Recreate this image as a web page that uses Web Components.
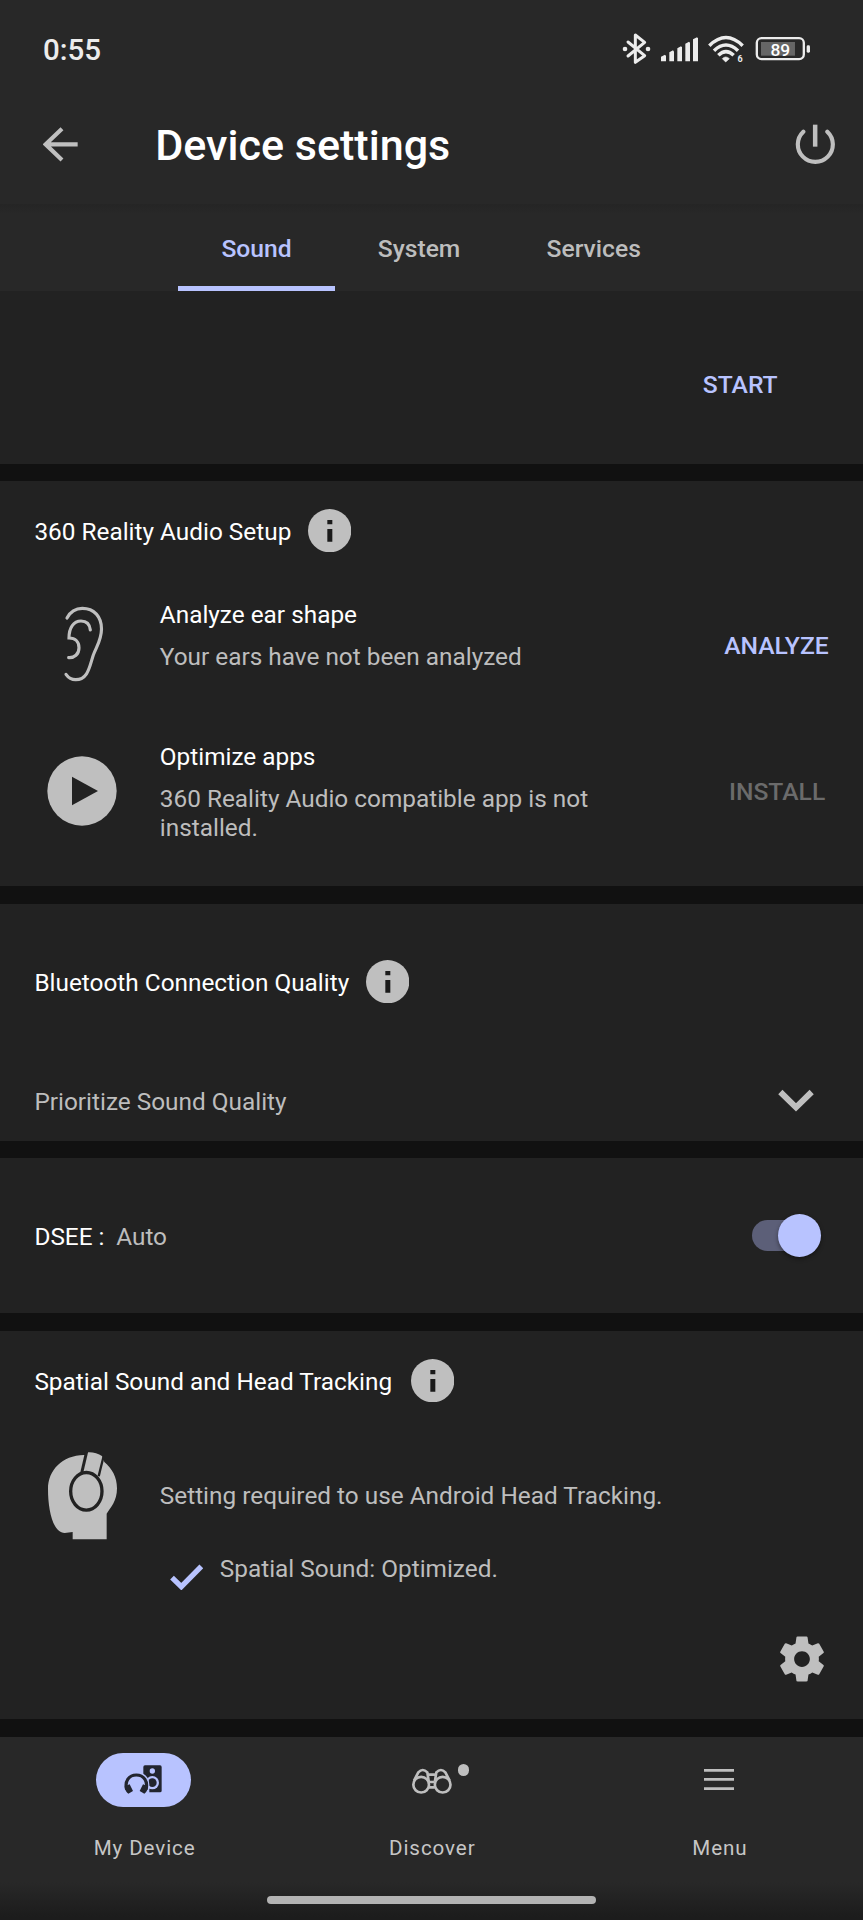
<!DOCTYPE html>
<html lang="en">
<head>
<meta charset="utf-8">
<title>Device settings</title>
<style>
  html, body { margin: 0; background: #111; }
  body { font-family: Roboto, sans-serif; font-size: 24.36px; line-height: 29px; color: #fff; width: 863px; height: 1920px; overflow: hidden; }
</style>
</head>
<body>
<script>
const define = (name, html, setup) => {
  const tpl = document.createElement('template');
  tpl.innerHTML = html;
  customElements.define(name, class extends HTMLElement {
    connectedCallback() {
      if (this.shadowRoot) return;
      this.attachShadow({ mode: 'open' }).append(tpl.content.cloneNode(true));
      if (setup) setup(this, this.shadowRoot);
    }
  });
};

const ICONS = {
  back: [[130, 376, 104, 110], '<path d="M187 384 138 431 187 478M140 431H234" fill="none" stroke="currentColor" stroke-width="12.500"/>'],
  power: [[586, 310, 120, 124], '<path d="M611 333A52.500 52.500 0 1 0 683 333" fill="none" stroke="currentColor" stroke-width="12.500" stroke-linecap="round"/><path d="M646.500 312V378" stroke="currentColor" stroke-width="13.500"/>'],
  ear: [[190, 408, 126, 234], '<g fill="none" stroke="currentColor" stroke-width="9.500" stroke-linecap="round"><path d="M202 447C212 428 228 418 248 418C284 418 305.500 444 305.500 480C305.500 512 292 530 281 558C270 590 266 632 228 632C214 632 206 626 199 616"/><path d="M272 483C270 464 260 456 244 456C222 456 208 476 208 507C228 507 238 520 238 536C238 556 224 567 207 566"/></g>'],
  play: [[141, 860, 210, 210], '<circle cx="246" cy="965" r="104" fill="currentColor"/><path d="M216 922 294 965 216 1008Z" fill="#222"/>'],
  head: [[142, 333, 208, 264], '<path d="M250 342C184 343 142 388 142 444C142 510 158 576 192 576L216 573V595H318V518C330 500 349 480 349 442C349 408 334 382 311 363L305 346C292 337 276 333 262 334L254 342Z" fill="currentColor"/><g fill="none" stroke="#222"><path d="M258 332 243 396" stroke-width="9"/><path d="M309 345 294 406" stroke-width="7"/></g><ellipse cx="257" cy="451" rx="47" ry="56.500" fill="currentColor" stroke="#222" stroke-width="10"/>'],
  check: [[510, 672, 100, 78], '<path d="M516 713 544 740 604 679" fill="none" stroke="currentColor" stroke-width="16"/>'],
  chevron: [[235, 86, 108, 70], '<path d="M242 95 289 141 336 95" fill="none" stroke="currentColor" stroke-width="18"/>'],
  info: [[0, 0, 130, 130], '<circle cx="65" cy="65" r="65" fill="currentColor"/><path d="M58 33h15v13h-15zM58 60h15v38h-15z" fill="#1a1a1a"/>'],
  gear: [[0, 0, 24, 24], '<path fill="currentColor" d="M19.430 12.980c.04-.32.07-.64.07-.98s-.03-.66-.07-.98l2.110-1.650c.19-.15.24-.42.12-.64l-2-3.460c-.12-.22-.39-.3-.61-.22l-2.490 1c-.52-.4-1.080-.73-1.690-.98l-.38-2.650C14.460 2.180 14.250 2 14 2h-4c-.25 0-.46.18-.49.42l-.38 2.650c-.61.25-1.170.59-1.690.98l-2.490-1c-.23-.09-.49 0-.61.22l-2 3.460c-.13.22-.07.49.12.64l2.110 1.650c-.04.32-.07.65-.07.98s.03.66.07.98l-2.110 1.650c-.19.15-.24.42-.12.64l2 3.460c.12.22.39.3.61.22l2.490-1c.52.4 1.080.73 1.690.98l.38 2.650c.03.24.24.42.49.42h4c.25 0 .46-.18.49-.42l.38-2.650c.61-.25 1.170-.59 1.690-.98l2.490 1c.23.09.49 0 .61-.22l2-3.460c.12-.22.07-.49-.12-.64l-2.110-1.650zM12 15.500c-1.930 0-3.500-1.570-3.500-3.500s1.570-3.500 3.500-3.500 3.500 1.570 3.500 3.500-1.570 3.500-3.500 3.500z"/>'],
  devices: [[289, 128, 285, 162], '<rect x="431" y="165" width="55" height="81" rx="5" fill="currentColor"/><circle cx="458" cy="182" r="8" fill="#b8c3ff"/><circle cx="458" cy="217" r="20" fill="#b8c3ff"/><circle cx="458" cy="217" r="13" fill="currentColor"/><path d="M410 184A39 39 0 0 1 449 224V250H410Z" fill="#b8c3ff"/><path d="M381 238C374 212 388 194 410 194S446 212 439 238" fill="none" stroke="currentColor" stroke-width="9.500"/><path d="M375 228 390 222 400 242 386 250Q377 246 375 228ZM445 228 430 222 420 242 434 250Q443 246 445 228Z" fill="currentColor"/>'],
  binoculars: [[92, 490, 125, 90], '<g fill="none" stroke="currentColor" stroke-width="8"><circle cx="122.500" cy="549" r="23.500"/><circle cx="187" cy="549" r="23.500"/><path d="M101 537 114 512Q127 498 141 512L145 538M208 537 195 512Q182 498 168 512L164 538M143 519H166M146 541H163M146 557H163"/></g>'],
  menu: [[972, 505, 92, 68], '<path d="M972 512H1064M972 539H1064M972 567H1064" stroke="currentColor" stroke-width="8.500"/>'],
  status: [[60, 35, 580, 100], `<g fill="none" stroke="currentColor" stroke-width="9" stroke-linejoin="round" stroke-linecap="round"><path d="M84 65 134 106 106 126V44L134 66 84 107"/></g><g fill="currentColor"><circle cx="75" cy="86" r="7"/><circle cx="144" cy="86" r="7"/>
    <path d="M183 123V109L195 103L198 107V123ZM208 123V96L219 90L222 94V123ZM232 123V84L243 78L246 81V123ZM256 123V70L267 64L270 67V123ZM279 123V57L291 51L294 54V123Z"/><path d="M377 125 367 115Q377 105 388 115Z" stroke="currentColor" stroke-width="2" stroke-linejoin="round"/><rect x="620" y="75" width="10" height="22" rx="4"/></g>
    <g fill="none" stroke="currentColor" stroke-width="10.500"><path d="M328 76Q378 27 428 76"/><path d="M342 91Q378 57 414 91"/><path d="M355 105Q378 83 401 105"/></g>
    <rect x="470.500" y="53.500" width="141" height="63" rx="14" fill="none" stroke="currentColor" stroke-width="7"/><rect x="483" y="65" width="102" height="41" fill="#666"/>
    <text x="541" y="107.500" font-size="52" font-weight="500" text-anchor="middle" fill="#fff">89</text><text x="420" y="125" font-size="27" font-weight="700" text-anchor="middle" fill="currentColor">6</text>`],
};

/* Inline vector icon; the view boxes use three units per pixel except for the gear. */
define('ui-icon', `<style>:host{display:block;flex:none;color:#bfbfbf}svg{display:block;font-family:Roboto,sans-serif}</style>`, (el, root) => {
  const name = el.getAttribute('name');
  const [box, body] = ICONS[name];
  const scale = name === 'gear' ? 2.25 : 1 / 3;
  root.innerHTML += `<svg viewBox="${box.join(' ')}" width="${box[2] * scale}" height="${box[3] * scale}">${body}</svg>`;
});

define('status-bar', `<style>
  :host{display:flex;justify-content:space-between;align-items:flex-start;height:92px;box-sizing:border-box;padding:32px 49.700px 0 43px;background:#282828;color:#ececec}
  .time{font-size:29.500px;font-weight:500;line-height:34px;margin-top:1.400px}
  ui-icon{color:#ececec}
</style><div class="time"><slot></slot></div><ui-icon name="status"></ui-icon>`);

define('app-header', `<style>
  :host{display:flex;align-items:flex-start;height:112px;background:#282828;box-sizing:border-box;padding:28px 27.700px 0 43.300px}
  h1{margin:0 auto 0 77.200px;font-size:43.100px;font-weight:500;line-height:51px}
  .back{margin-top:5.600px}.power{margin-top:3.600px}
</style><ui-icon class="back" name="back"></ui-icon><h1><slot></slot></h1><ui-icon class="power" name="power"></ui-icon>`);

define('tab-bar', `<style>
  :host{display:flex;height:86.500px;box-sizing:border-box;padding-left:178.300px;background:linear-gradient(#252525,#272727 7px,#282828 9px)}
</style><slot></slot>`);

define('tab-item', `<style>
  :host{display:block;box-sizing:border-box;height:86.500px;padding:30px 43.100px 0;font-size:24.650px;font-weight:500;color:#bdbdbd}
  :host([selected]){color:#b8c3ff;border-bottom:5px solid #b8c3ff}
</style><slot></slot>`);

define('settings-card', `<style>
  :host{display:flex;flex-direction:column;box-sizing:border-box;background:#222}
</style><slot></slot>`);

define('card-heading', `<style>
  :host{display:flex;align-items:center;gap:16.400px;height:43.300px;padding-left:34.400px}
  span{margin-top:var(--text-drop,1px)}
</style><span><slot></slot></span><ui-icon name="info"></ui-icon>`);

define('text-button', `<style>
  :host{display:block;font-size:24.650px;font-weight:500;color:#b8c3ff}
  :host([disabled]){color:#6b6b6b}
</style><slot></slot>`);

define('setting-row', `<style>
  :host{display:grid;grid-template-columns:159.800px 436px 1fr;align-items:start}
  .icon{display:flex;justify-content:center;padding-left:4.400px}
  .sub{color:#bdbdbd;margin-top:var(--sub-gap,13px)}
  .end{display:flex;justify-content:flex-end}
</style><div class="icon"><slot name="icon"></slot></div><div><slot name="title"></slot><div class="sub"><slot></slot></div></div><div class="end"><slot name="action"></slot></div>`);

define('toggle-switch', `<style>
  :host{display:flex;align-items:center;width:62px;height:31px;border-radius:16px;background:#5c5f78}
  i{width:43.300px;height:43.300px;flex:none;margin-left:25.600px;border-radius:50%;background:#b8c3ff;box-shadow:0 2px 4px #0006}
</style><i></i>`);

define('line-item', `<style>
  :host{display:flex;justify-content:space-between;align-items:center;padding-left:34.400px}
</style><slot></slot>`);

define('muted-text', `<style>:host{display:inline;color:#bdbdbd}</style><slot></slot>`);

define('status-line', `<style>
  :host{display:flex;align-items:flex-start;color:#bdbdbd;padding-left:170px;gap:16.500px}
  ui-icon{color:#b8c3ff;margin-top:10px}
</style><ui-icon name="check"></ui-icon><span><slot></slot></span>`);

define('bottom-nav', `<style>
  :host{display:grid;grid-template-columns:repeat(3,1fr);grid-template-rows:158px 1fr;height:183px;background:linear-gradient(#282828 145px,#1c1c1c 180px)}
  .bar{grid-column:1/-1;justify-self:center;width:328.500px;height:8.300px;border-radius:5px;background:#b3b3b3;margin-top:.7px}
</style><slot></slot><div class="bar"></div>`);

define('nav-item', `<style>
  :host{display:flex;flex-direction:column;align-items:center;padding-top:15.700px;font-size:20.600px;letter-spacing:.9px;line-height:24px;color:#c6c6c6}
  .icon{position:relative;display:grid;place-items:center;width:95px;height:54px;border-radius:27px}
  :host([selected]) .icon{background:#b8c3ff}
  :host([selected]) ui-icon{color:#22252f}
  .label{margin-top:29.300px;margin-left:1.600px}
  .dot{display:none;position:absolute;left:73.600px;top:11.700px;width:11.700px;height:11.700px;border-radius:50%;background:#bfbfbf}
  :host([badge]) .dot{display:block}
</style><div class="icon"><b class="dot"></b></div><div class="label"><slot></slot></div>`, (el, root) => {
  const icon = document.createElement('ui-icon');
  icon.setAttribute('name', el.getAttribute('icon'));
  root.querySelector('.icon').prepend(icon);
});

define('device-settings', `<style>
  :host{display:block}
  .start{height:173.500px;margin-bottom:17px;align-items:flex-end;padding:79.500px 85.400px 0 0}
  .audio{height:405px;margin-bottom:18px;padding-top:28px}
  .ear{margin-top:47.700px}
  .ear ui-icon{margin-top:5.500px;margin-left:4px}
  .ear text-button{margin:31px 34.300px 0 0}
  .apps{margin-top:59px}
  .apps ui-icon{margin-top:14px}
  .apps text-button{margin:35px 37.800px 0 0}
  .quality{height:237px;margin-bottom:17px;padding-top:55.700px;--text-drop:3px}
  .select{margin-top:84px;padding-right:48.700px}
  .select ui-icon{margin-bottom:2px}
  .dsee{height:155px;margin-bottom:18px;padding-top:62px}
  .dsee line-item{padding-right:49px;height:31px}
  .dsee span{margin-top:2px}
  .dsee muted-text{margin-left:5.700px}
  .spatial{height:388px;margin-bottom:18px;padding-top:28px}
  .spatial card-heading{gap:18.900px}
  .track{margin-top:49px;--sub-gap:29.700px;grid-template-columns:159.800px 1fr 0}
  .track ui-icon{margin:.5px 0 0 .8px}
  .ok{margin-top:14.500px}
  .gear{align-self:flex-end;margin:41.500px 33.700px 0 0}
</style>
<status-bar>0:55</status-bar>
<app-header>Device settings</app-header>
<tab-bar><tab-item selected>Sound</tab-item><tab-item>System</tab-item><tab-item>Services</tab-item></tab-bar>
<settings-card class="start"><text-button>START</text-button></settings-card>
<settings-card class="audio">
  <card-heading>360 Reality Audio Setup</card-heading>
  <setting-row class="ear"><ui-icon slot="icon" name="ear"></ui-icon><span slot="title">Analyze ear shape</span>Your ears have not been analyzed<text-button slot="action">ANALYZE</text-button></setting-row>
  <setting-row class="apps"><ui-icon slot="icon" name="play"></ui-icon><span slot="title">Optimize apps</span>360 Reality Audio compatible app is not installed.<text-button slot="action" disabled>INSTALL</text-button></setting-row>
</settings-card>
<settings-card class="quality">
  <card-heading>Bluetooth Connection Quality</card-heading>
  <line-item class="select"><muted-text>Prioritize Sound Quality</muted-text><ui-icon name="chevron"></ui-icon></line-item>
</settings-card>
<settings-card class="dsee">
  <line-item><span>DSEE :&nbsp;<muted-text>Auto</muted-text></span><toggle-switch></toggle-switch></line-item>
</settings-card>
<settings-card class="spatial">
  <card-heading>Spatial Sound and Head Tracking</card-heading>
  <setting-row class="track"><ui-icon slot="icon" name="head"></ui-icon>Setting required to use Android Head Tracking.</setting-row>
  <status-line class="ok">Spatial Sound: Optimized.</status-line>
  <ui-icon class="gear" name="gear"></ui-icon>
</settings-card>
<bottom-nav><nav-item selected icon="devices">My Device</nav-item><nav-item badge icon="binoculars">Discover</nav-item><nav-item icon="menu">Menu</nav-item></bottom-nav>`);
</script>
<device-settings></device-settings>
</body>
</html>
